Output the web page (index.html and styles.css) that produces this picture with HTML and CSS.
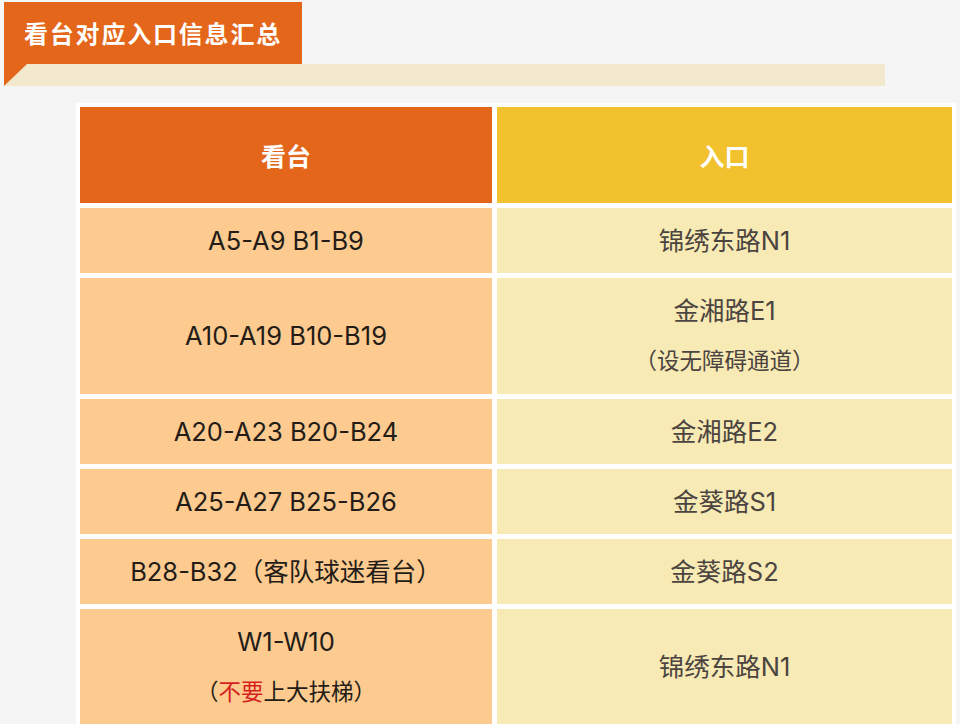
FILE: index.html
```html
<!DOCTYPE html>
<html lang="zh-CN">
<head>
<meta charset="utf-8">
<title>看台对应入口信息汇总</title>
<link rel="stylesheet" href="styles.css">
</head>
<body>
<div class="page">
  <div class="banner">
    <div class="banner-title">看台对应入口信息汇总</div>
    <div class="banner-under">
      <div class="fold"></div>
      <div class="stripe"></div>
    </div>
  </div>
  <div class="table">
    <div class="cell head-left">看台</div>
    <div class="cell head-right">入口</div>

    <div class="cell left">A5-A9 B1-B9</div>
    <div class="cell right">锦绣东路N1</div>

    <div class="cell left">A10-A19 B10-B19</div>
    <div class="cell right"><div class="line">金湘路E1</div><div class="line small">（设无障碍通道）</div></div>

    <div class="cell left">A20-A23 B20-B24</div>
    <div class="cell right">金湘路E2</div>

    <div class="cell left">A25-A27 B25-B26</div>
    <div class="cell right">金葵路S1</div>

    <div class="cell left">B28-B32（客队球迷看台）</div>
    <div class="cell right">金葵路S2</div>

    <div class="cell left"><div class="line">W1-W10</div><div class="line small">（<span class="red">不要</span>上大扶梯）</div></div>
    <div class="cell right">锦绣东路N1</div>
  </div>
</div>
</body>
</html>
```

FILE: styles.css
```css
html, body {
  margin: 0;
  padding: 0;
  background: #f5f5f5;
  font-family: Inter, "Noto Sans CJK SC", sans-serif;
  overflow: hidden;
}

.page {
  width: 960px;
  height: 724px;
  padding-top: 2px;
  box-sizing: border-box;
}

.banner {
  margin-left: 4px;
}

.banner-title {
  width: 298px;
  height: 62px;
  background: #e4661a;
  color: #ffffff;
  font-family: "Noto Sans CJK SC", sans-serif;
  font-weight: 700;
  font-size: 24px;
  letter-spacing: 1.8px;
  line-height: 62px;
  padding-left: 20px;
  box-sizing: border-box;
}

.banner-under {
  display: flex;
  height: 22px;
}

.fold {
  width: 0;
  height: 0;
  border-top: 22px solid #e4661a;
  border-right: 23px solid #f1e8cd;
}

.stripe {
  width: 858px;
  background: #f1e8cd;
}

.table {
  margin: 17px 0 0 76px;
  width: 880px;
  padding: 4px;
  box-sizing: border-box;
  background: #ffffff;
  display: grid;
  grid-template-columns: 412px 455px;
  grid-template-rows: 96px 65px 116px 65px 65px 65px 116px;
  column-gap: 5px;
  row-gap: 5px;
}

.cell {
  display: flex;
  flex-direction: column;
  align-items: center;
  justify-content: center;
  font-size: 25.5px;
  line-height: 32px;
}

.head-left {
  background: #e4661a;
  color: #ffffff;
  font-family: "Noto Sans CJK SC", sans-serif;
  font-weight: 700;
  font-size: 25px;
}

.head-right {
  background: #f2c12e;
  color: #ffffff;
  font-family: "Noto Sans CJK SC", sans-serif;
  font-weight: 700;
  font-size: 25px;
}

.left {
  background: #fdca8f;
  color: #231c17;
}

.right {
  background: #f8eab4;
  color: #4b4440;
}

.line {
  line-height: 50px;
}

.small {
  font-size: 22.5px;
}

.red {
  color: #d61f1f;
}
```
